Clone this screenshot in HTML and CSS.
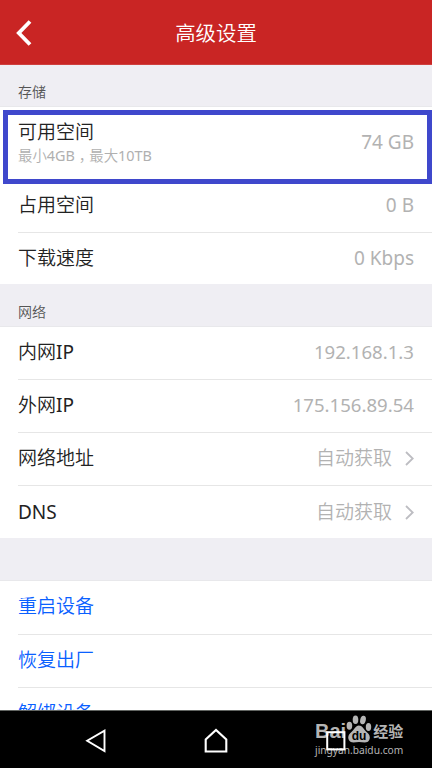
FILE: index.html
```html
<!DOCTYPE html>
<html lang="zh-CN">
<head>
    <meta charset="UTF-8">
    <meta name="viewport" content="width=device-width, initial-scale=1.0">
    <title>高级设置</title>
    <link rel="stylesheet" href="styles.css">
</head>
<body>
    <div class="screen">
        <header class="header">
            <svg class="back" width="16" height="26" viewBox="0 0 16 26"><path d="M14 1.5L2.8 13L14 24.5" fill="none" stroke="#fff" stroke-width="3.8"/></svg>
            <h1>高级设置</h1>
        </header>

        <main class="content">
            <h2 class="section-title first">存储</h2>
            <div class="group">
                <div class="row tall">
                    <div class="label">可用空间<small>最小<span class="latin">4GB</span><span class="comma">，</span>最大<span class="latin">10TB</span></small></div>
                    <span class="value latin">74 GB</span>
                </div>
                <div class="row"><span class="label">占用空间</span><span class="value latin">0 B</span></div>
                <div class="row"><span class="label">下载速度</span><span class="value latin">0 Kbps</span></div>
            </div>

            <h2 class="section-title">网络</h2>
            <div class="group">
                <div class="row"><span class="label">内网<span class="latin">IP</span></span><span class="value latin ip">192.168.1.3</span></div>
                <div class="row"><span class="label">外网<span class="latin">IP</span></span><span class="value latin ip">175.156.89.54</span></div>
                <div class="row">
                    <span class="label">网络地址</span><span class="value">自动获取</span>
                    <svg class="arrow" width="9" height="15" viewBox="0 0 9 15"><path d="M1 1L7.7 7.5L1 14" fill="none" stroke="#bdbdc2" stroke-width="1.8"/></svg>
                </div>
                <div class="row">
                    <span class="label latin">DNS</span><span class="value">自动获取</span>
                    <svg class="arrow" width="9" height="15" viewBox="0 0 9 15"><path d="M1 1L7.7 7.5L1 14" fill="none" stroke="#bdbdc2" stroke-width="1.8"/></svg>
                </div>
            </div>

            <div class="section-title"></div>
            <div class="group actions">
                <div class="row"><span class="label">重启设备</span></div>
                <div class="row"><span class="label">恢复出厂</span></div>
                <div class="row"><span class="label">解绑设备</span></div>
            </div>
        </main>

        <nav class="navbar">
            <svg width="24" height="26" viewBox="0 0 24 26"><path d="M20.5 2.7V23L3.2 12.8Z" fill="none" stroke="#fff" stroke-width="1.9"/></svg>
            <svg width="24" height="26" viewBox="0 0 24 26"><path d="M1.7 23.5V11.5L12 2L22.3 11.5V23.5Z" fill="none" stroke="#fff" stroke-width="2.1"/></svg>
            <svg width="24" height="26" viewBox="0 0 24 26"></svg>
        </nav>

        <div class="highlight"></div>

        <div class="watermark">
            <div class="brand">
                <span class="bai">Bai</span>
                <svg width="26" height="28" viewBox="0 0 26 28" fill="#b5b5b5">
                    <ellipse cx="9.5" cy="4.8" rx="2.8" ry="4.3"/>
                    <ellipse cx="17" cy="5" rx="2.8" ry="4.3" transform="rotate(12 17 5)"/>
                    <ellipse cx="3.4" cy="10.8" rx="2.8" ry="4"/>
                    <ellipse cx="22.5" cy="12" rx="2.7" ry="4"/>
                    <path d="M12.8 10.5C16.3 10.5 17.5 14 20 16.5C22.5 18.5 25 21 23.2 25C21.5 28.8 17 27 13 27C9 27 5 28.6 3 25.3C1 21.5 3.3 18.8 5.7 16.8C8.5 14.5 9.5 10.5 12.8 10.5Z"/>
                    <text x="13" y="25" text-anchor="middle" class="du">du</text>
                </svg>
                <span class="cn">经验</span>
            </div>
            <div class="url">jingyan.baidu.com</div>
        </div>
        <svg class="recent" width="20" height="20" viewBox="0 0 20 20"><rect x="1.2" y="1.2" width="17.2" height="17.2" fill="none" stroke="#fff" stroke-width="2"/></svg>
    </div>
</body>
</html>
```
FILE: styles.css
```css
* {
    box-sizing: border-box;
}
body {
    margin: 0;
    background-color: #000;
    color: #222;
    font-family: 'Noto Sans', 'Noto Sans CJK SC', sans-serif;
    font-weight: 350;
}
.screen {
    position: relative;
    display: flex;
    flex-direction: column;
    width: 432px;
    height: 768px;
    overflow: hidden;
}
.header {
    display: flex;
    align-items: center;
    height: 65px;
    padding: 2px 16px 0;
    background-color: #c92524;
    border-bottom: 1px solid #cf3f3e;
}
.header h1 {
    flex: 1;
    margin: 0 16px 2px 0;
    color: #fff;
    font-size: 20.4px;
    font-weight: 350;
    text-align: center;
}
.content {
    flex: 1;
    overflow: hidden;
    background-color: #efeef3;
}
.section-title {
    height: 43px;
    margin: 0;
    padding: 17px 18px 0;
    border-bottom: 1px solid #e8e8eb;
    color: #555;
    font-size: 14px;
    font-weight: 350;
    line-height: 21px;
}
.section-title.first {
    height: 42px;
    padding-top: 16px;
}
.group {
    background-color: #fff;
}
.row {
    display: flex;
    align-items: center;
    height: 53px;
    margin-left: 18px;
    padding: 0 18px 3px 0;
    border-bottom: 1px solid #e6e6e6;
    font-size: 19px;
    line-height: 26px;
}
.row:last-child {
    height: 51px;
    padding-bottom: 1px;
    border-bottom: 0;
}
.row.tall {
    height: 73px;
    padding-bottom: 1px;
}
.tall .value {
    margin-bottom: 2px;
}
.label {
    flex: 1;
}
.label small {
    display: block;
    color: #b0b0b0;
    font-size: 14.4px;
    line-height: 21px;
}
.latin {
    font-weight: 400;
}
.comma {
    display: inline-block;
    width: 14.4px;
    text-indent: 4px;
}
.value {
    color: #b2b2b2;
    font-size: 19px;
}
.value.ip {
    font-size: 18.6px;
}
.arrow {
    margin: 2px 0 0 13px;
}
.group:nth-of-type(2) .row:last-child {
    height: 52px;
}
.actions {
    height: 200px;
    color: #0a60ff;
}
.actions .row:first-child {
    height: 54px;
}
.navbar {
    display: flex;
    align-items: center;
    justify-content: space-between;
    height: 58px;
    padding: 3px 84px 0;
    background-color: #000;
    border-top: 1px solid #626562;
}
/* marks the free space row */
.highlight {
    position: absolute;
    top: 110px;
    left: 3px;
    width: 429px;
    height: 74px;
    border: 5px solid #3f48cc;
}
.watermark {
    position: absolute;
    top: 714px;
    left: 315px;
    width: 90px;
    color: #b5b5b5;
}
.brand {
    display: flex;
    height: 29px;
    align-items: flex-end;
    font: bold 20px/20px 'Liberation Sans', sans-serif;
}
.brand svg {
    flex: none;
}
.bai {
    height: 22px;
}
.brand .cn {
    height: 22px;
    margin-left: 1px;
    font: bold 15px/20px 'Noto Sans CJK SC', sans-serif;
}
.du {
    fill: #000;
    font: bold 12px 'Liberation Sans', sans-serif;
}
.url {
    font: 10.2px/15px 'Noto Sans', sans-serif;
    white-space: nowrap;
}
.recent {
    position: absolute;
    top: 731px;
    left: 326px;
}
```
